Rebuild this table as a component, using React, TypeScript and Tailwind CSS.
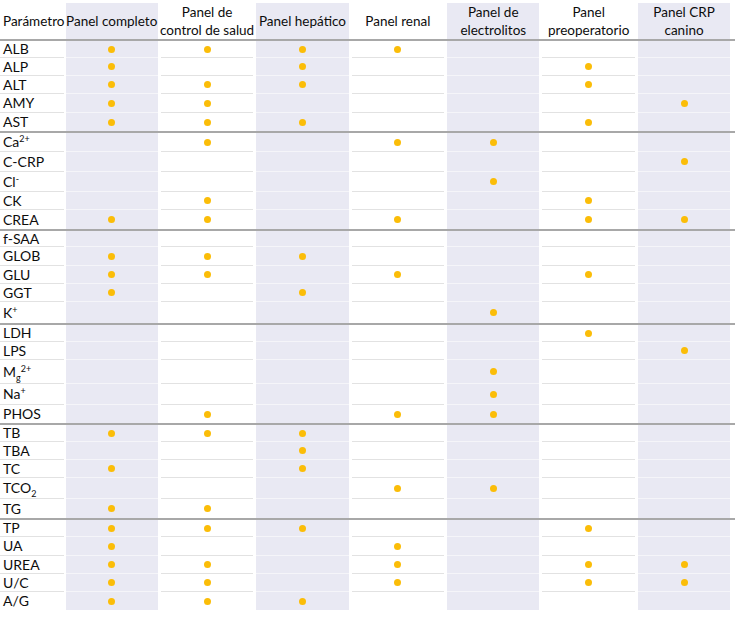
import React from "react";

type Row = { label: React.ReactNode; h: number; dots: number[]; thick?: boolean; last?: boolean };

const Sup = ({ children }: { children: React.ReactNode }) => (
  <span className="relative top-[-5px] text-[9px] leading-none">{children}</span>
);
const Sub = ({ children }: { children: React.ReactNode }) => (
  <span className="relative top-[4px] text-[9px] leading-none">{children}</span>
);

const rows: Row[] = [
  { label: "ALB", h: 17, dots: [1, 2, 3, 4] },
  { label: "ALP", h: 18, dots: [1, 3, 6] },
  { label: "ALT", h: 18, dots: [1, 2, 3, 6] },
  { label: "AMY", h: 19, dots: [1, 2, 7] },
  { label: "AST", h: 20, dots: [1, 2, 3, 6], thick: true },
  { label: <>Ca<Sup>2+</Sup></>, h: 19, dots: [2, 4, 5] },
  { label: "C-CRP", h: 20, dots: [7] },
  { label: <>Cl<Sup>-</Sup></>, h: 20, dots: [5] },
  { label: "CK", h: 18, dots: [2, 6] },
  { label: "CREA", h: 21, dots: [1, 2, 4, 6, 7], thick: true },
  { label: "f-SAA", h: 16, dots: [] },
  { label: "GLOB", h: 19, dots: [1, 2, 3] },
  { label: "GLU", h: 18, dots: [1, 2, 4, 6] },
  { label: "GGT", h: 18, dots: [1, 3] },
  { label: <>K<Sup>+</Sup></>, h: 23, dots: [5], thick: true },
  { label: "LDH", h: 17, dots: [6] },
  { label: "LPS", h: 18, dots: [7] },
  { label: <>M<Sub>g</Sub><Sup>2+</Sup></>, h: 24, dots: [5] },
  { label: <>Na<Sup>+</Sup></>, h: 21, dots: [5] },
  { label: "PHOS", h: 20, dots: [2, 4, 5], thick: true },
  { label: "TB", h: 17, dots: [1, 2, 3] },
  { label: "TBA", h: 18, dots: [3] },
  { label: "TC", h: 18, dots: [1, 3] },
  { label: <>TCO<Sub>2</Sub></>, h: 21, dots: [4, 5] },
  { label: "TG", h: 21, dots: [1, 2], thick: true },
  { label: "TP", h: 17, dots: [1, 2, 3, 6] },
  { label: "UA", h: 19, dots: [1, 4] },
  { label: "UREA", h: 18, dots: [1, 2, 4, 6, 7] },
  { label: "U/C", h: 18, dots: [1, 2, 4, 6, 7] },
  { label: "A/G", h: 18, dots: [1, 2, 3], last: true },
];

const headers: React.ReactNode[] = [
  "Panel completo",
  <>Panel de<br />control de salud</>,
  "Panel hepático",
  "Panel renal",
  <>Panel de<br />electrolitos</>,
  <>Panel<br />preoperatorio</>,
  <>Panel CRP<br />canino</>,
];

const shaded = (i: number) => i % 2 === 1;
const grid = "grid grid-cols-[64px_repeat(7,95.4px)]";

export default function App() {
  return (
    <div
      className="w-[735px] h-[620px] bg-white pt-[3px] text-[#0d0d0d] overflow-hidden"
      style={{ fontFamily: "Lato, 'Open Sans', sans-serif" }}
    >
      {/* header */}
      <div className={`${grid} h-[38px] border-b-2 border-[#a8a8a8] text-[13.5px] leading-[18px]`}>
        <div className="flex items-center pl-[3px] whitespace-nowrap">Parámetro</div>
        {headers.map((h, i) => (
          <div key={i} className="px-[1.5px] h-full">
            <div
              className={`h-full flex items-center justify-center text-center whitespace-nowrap ${
                shaded(i + 1) ? "bg-[#e9e9f3]" : ""
              }`}
            >
              <span>{h}</span>
            </div>
          </div>
        ))}
      </div>
      {rows.map((r, ri) => (
        <div
          key={ri}
          className={`${grid} ${r.thick ? "border-b-2 border-[#a8a8a8]" : ""} text-[14px]`}
          style={{ height: r.h }}
        >
          <div
            className={`flex items-center pl-[3px] whitespace-nowrap ${
              !r.thick && !r.last ? "border-b border-[#e2e2e2]" : ""
            }`}
          >
            <span className="leading-none">{r.label}</span>
          </div>
          {[1, 2, 3, 4, 5, 6, 7].map((c) => (
            <div key={c} className="px-[1.5px] h-full">
              <div
                className={`h-full flex items-center justify-center ${
                  shaded(c) ? "bg-[#e9e9f3]" : ""
                } ${
                  !r.thick && !r.last
                    ? shaded(c)
                      ? "border-b border-[#f5f5f9]"
                      : "border-b border-[#e2e2e2]"
                    : ""
                }`}
              >
                {r.dots.includes(c) && (
                  <span className="block w-[7px] h-[7px] rounded-full bg-[#fbbd08]" />
                )}
              </div>
            </div>
          ))}
        </div>
      ))}
    </div>
  );
}
